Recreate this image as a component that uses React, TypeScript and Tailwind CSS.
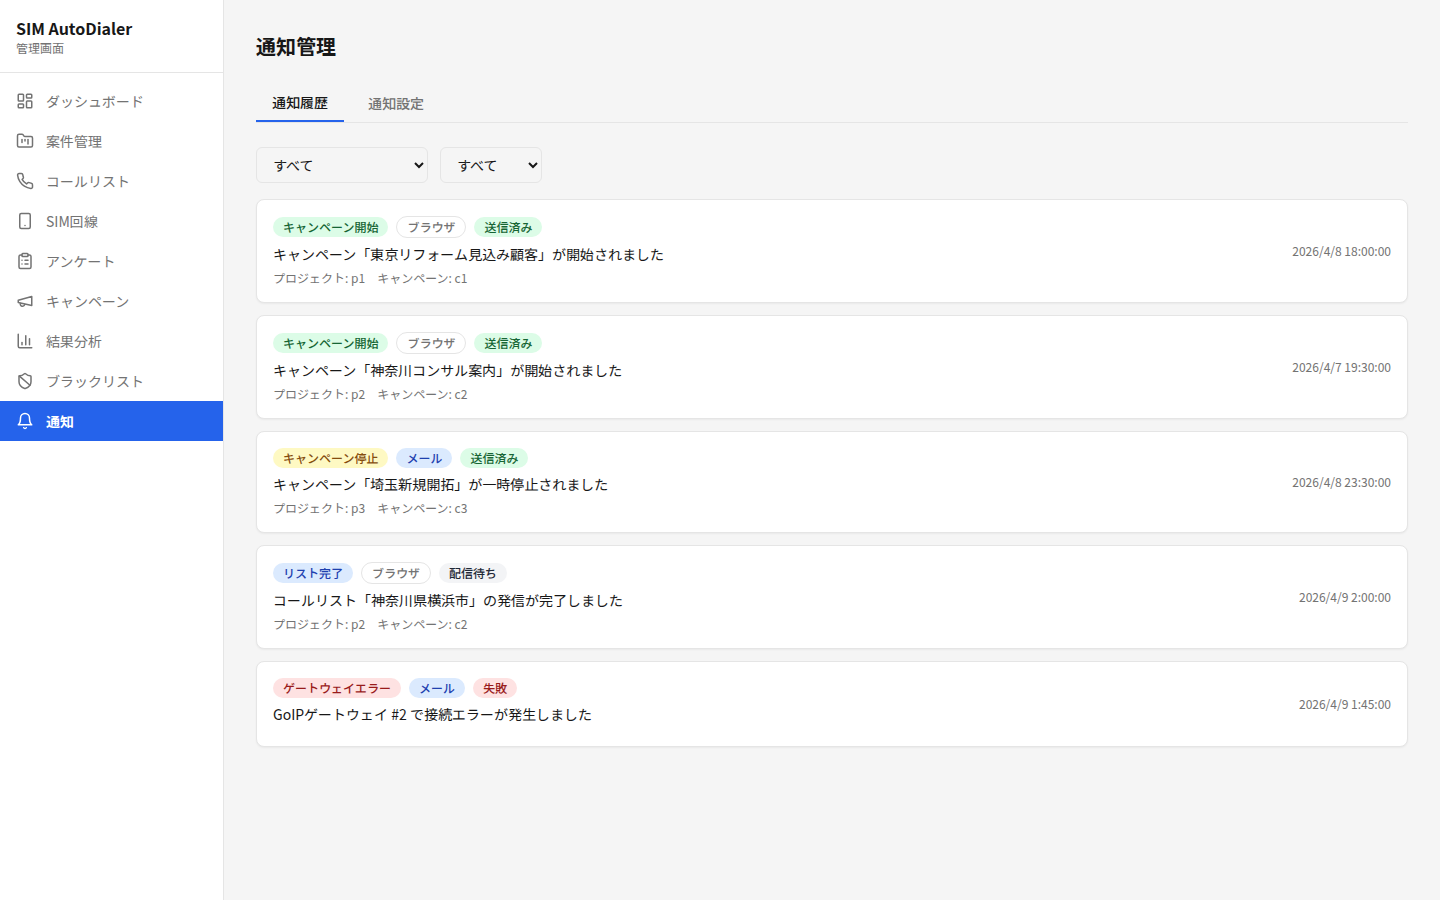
import { useState, type ReactNode } from 'react';
import {
  BarChart3,
  ClipboardList,
  FolderKanban,
  LayoutDashboard,
  ShieldBan,
  Smartphone,
} from 'lucide-react';

type NotificationItem = {
  id: string;
  type: 'start' | 'stop' | 'complete' | 'error';
  channel: 'browser' | 'email';
  status: 'sent' | 'pending' | 'failed';
  message: string;
  projectId?: string;
  campaignId?: string;
  createdAt: string;
};

function StrokeIcon({ size, children }: { size: number; children: ReactNode }) {
  return (
    <svg
      width={size}
      height={size}
      viewBox="0 0 24 24"
      fill="none"
      stroke="currentColor"
      strokeWidth={2}
      strokeLinecap="round"
      strokeLinejoin="round"
    >
      {children}
    </svg>
  );
}

function Phone({ size }: { size: number }) {
  return (
    <StrokeIcon size={size}>
      <path d="M22 16.92v3a2 2 0 0 1-2.18 2 19.79 19.79 0 0 1-8.63-3.07 19.5 19.5 0 0 1-6-6 19.79 19.79 0 0 1-3.07-8.67A2 2 0 0 1 4.11 2h3a2 2 0 0 1 2 1.72 12.84 12.84 0 0 0 .7 2.81 2 2 0 0 1-.45 2.11L8.09 9.91a16 16 0 0 0 6 6l1.27-1.27a2 2 0 0 1 2.11-.45 12.84 12.84 0 0 0 2.81.7A2 2 0 0 1 22 16.92z" />
    </StrokeIcon>
  );
}

function Megaphone({ size }: { size: number }) {
  return (
    <StrokeIcon size={size}>
      <path d="m3 11 18-5v12L3 14v-3z" />
      <path d="M11.6 16.8a3 3 0 1 1-5.8-1.6" />
    </StrokeIcon>
  );
}

function Bell({ size }: { size: number }) {
  return (
    <StrokeIcon size={size}>
      <path d="M6 8a6 6 0 0 1 12 0c0 7 3 9 3 9H3s3-2 3-9" />
      <path d="M10.3 21a1.94 1.94 0 0 0 3.4 0" />
    </StrokeIcon>
  );
}

const NAV_ITEMS = [
  { label: 'ダッシュボード', icon: LayoutDashboard },
  { label: '案件管理', icon: FolderKanban },
  { label: 'コールリスト', icon: Phone },
  { label: 'SIM回線', icon: Smartphone },
  { label: 'アンケート', icon: ClipboardList },
  { label: 'キャンペーン', icon: Megaphone },
  { label: '結果分析', icon: BarChart3 },
  { label: 'ブラックリスト', icon: ShieldBan },
  { label: '通知', icon: Bell },
];

const TYPES = {
  start: { label: 'キャンペーン開始', className: 'bg-[#dcfce7] text-[#166534]' },
  stop: { label: 'キャンペーン停止', className: 'bg-[#fef9c3] text-[#854d0e]' },
  complete: { label: 'リスト完了', className: 'bg-[#dbeafe] text-[#1e40af]' },
  error: {
    label: 'ゲートウェイエラー',
    className: 'bg-[#fee2e2] text-[#991b1b]',
  },
};

const CHANNELS = {
  browser: {
    label: 'ブラウザ',
    className: 'border border-[#e5e5e5] text-[#737373]',
  },
  email: { label: 'メール', className: 'bg-[#dbeafe] text-[#1e40af]' },
};

const STATUSES = {
  sent: { label: '送信済み', className: 'bg-[#dcfce7] text-[#166534]' },
  pending: { label: '配信待ち', className: 'bg-[#f3f4f6] text-[#1f2937]' },
  failed: { label: '失敗', className: 'bg-[#fee2e2] text-[#991b1b]' },
};

const NOTIFICATIONS: NotificationItem[] = [
  {
    id: 'n1',
    type: 'start',
    channel: 'browser',
    status: 'sent',
    message: 'キャンペーン「東京リフォーム見込み顧客」が開始されました',
    projectId: 'p1',
    campaignId: 'c1',
    createdAt: '2026/4/8 18:00:00',
  },
  {
    id: 'n2',
    type: 'start',
    channel: 'browser',
    status: 'sent',
    message: 'キャンペーン「神奈川コンサル案内」が開始されました',
    projectId: 'p2',
    campaignId: 'c2',
    createdAt: '2026/4/7 19:30:00',
  },
  {
    id: 'n3',
    type: 'stop',
    channel: 'email',
    status: 'sent',
    message: 'キャンペーン「埼玉新規開拓」が一時停止されました',
    projectId: 'p3',
    campaignId: 'c3',
    createdAt: '2026/4/8 23:30:00',
  },
  {
    id: 'n4',
    type: 'complete',
    channel: 'browser',
    status: 'pending',
    message: 'コールリスト「神奈川県横浜市」の発信が完了しました',
    projectId: 'p2',
    campaignId: 'c2',
    createdAt: '2026/4/9 2:00:00',
  },
  {
    id: 'n5',
    type: 'error',
    channel: 'email',
    status: 'failed',
    message: 'GoIPゲートウェイ #2 で接続エラーが発生しました',
    createdAt: '2026/4/9 1:45:00',
  },
];

function Badge({ label, className }: { label: string; className: string }) {
  return (
    <span
      className={`inline-flex items-center rounded-full px-2.5 py-0.5 text-xs leading-4 font-medium ${className}`}
    >
      {label}
    </span>
  );
}

function Sidebar() {
  return (
    <aside className="w-56 shrink-0 border-r border-[#e5e5e5] bg-white">
      <div className="border-b border-[#e5e5e5] p-4">
        <h1 className="text-base leading-6 font-bold">SIM AutoDialer</h1>
        <p className="text-xs leading-4 text-[#737373]">管理画面</p>
      </div>
      <nav className="py-2">
        {NAV_ITEMS.map(({ label, icon: Icon }) => (
          <a
            key={label}
            href="#"
            className={`flex items-center gap-3 px-4 py-2.5 text-sm leading-5 ${
              label === '通知'
                ? 'bg-[#2563eb] font-bold text-white'
                : 'text-[#737373]'
            }`}
          >
            <Icon size={18} />
            {label}
          </a>
        ))}
      </nav>
    </aside>
  );
}

function NotificationCard({ item }: { item: NotificationItem }) {
  return (
    <div className="flex items-center justify-between rounded-lg border border-[#e5e5e5] bg-white p-4 shadow-xs">
      <div className="space-y-1.5">
        <div className="flex items-center gap-2">
          <Badge {...TYPES[item.type]} />
          <Badge {...CHANNELS[item.channel]} />
          <Badge {...STATUSES[item.status]} />
        </div>
        <p className="text-sm leading-5">{item.message}</p>
        <div className="flex gap-3 text-xs leading-4 text-[#737373]">
          {item.projectId && <span>プロジェクト: {item.projectId}</span>}
          {item.campaignId && <span>キャンペーン: {item.campaignId}</span>}
        </div>
      </div>
      <span className="text-xs leading-4 whitespace-nowrap text-[#737373]">
        {item.createdAt}
      </span>
    </div>
  );
}

export default function App() {
  const [tab, setTab] = useState('通知履歴');

  return (
    <div
      lang="ja"
      className="flex min-h-screen bg-[#f5f5f5] font-['Noto_Sans_JP','Noto_Sans_CJK_JP',sans-serif] text-[#171717]"
    >
      <Sidebar />
      <main className="flex-1 p-8">
        <h2 className="mb-6 text-xl leading-7 font-bold">通知管理</h2>

        <div className="mb-6 flex gap-2 border-b border-[#e5e5e5]">
          {['通知履歴', '通知設定'].map((name) => (
            <button
              key={name}
              onClick={() => setTab(name)}
              className={`px-4 py-2 text-sm leading-5 font-medium ${
                tab === name
                  ? 'border-b-2 border-[#2563eb]'
                  : 'text-[#737373]'
              }`}
            >
              {name}
            </button>
          ))}
        </div>

        <div className="mb-4 flex gap-3">
          <select className="h-9 w-[172px] rounded-md border border-[#e5e5e5] px-3 text-sm leading-5">
            <option>すべて</option>
            {Object.values(TYPES).map((t) => (
              <option key={t.label}>{t.label}</option>
            ))}
          </select>
          <select className="h-9 w-[102px] rounded-md border border-[#e5e5e5] px-3 text-sm leading-5">
            <option>すべて</option>
            {Object.values(CHANNELS).map((c) => (
              <option key={c.label}>{c.label}</option>
            ))}
          </select>
        </div>

        <div className="space-y-3">
          {NOTIFICATIONS.map((item) => (
            <NotificationCard key={item.id} item={item} />
          ))}
        </div>
      </main>
    </div>
  );
}
